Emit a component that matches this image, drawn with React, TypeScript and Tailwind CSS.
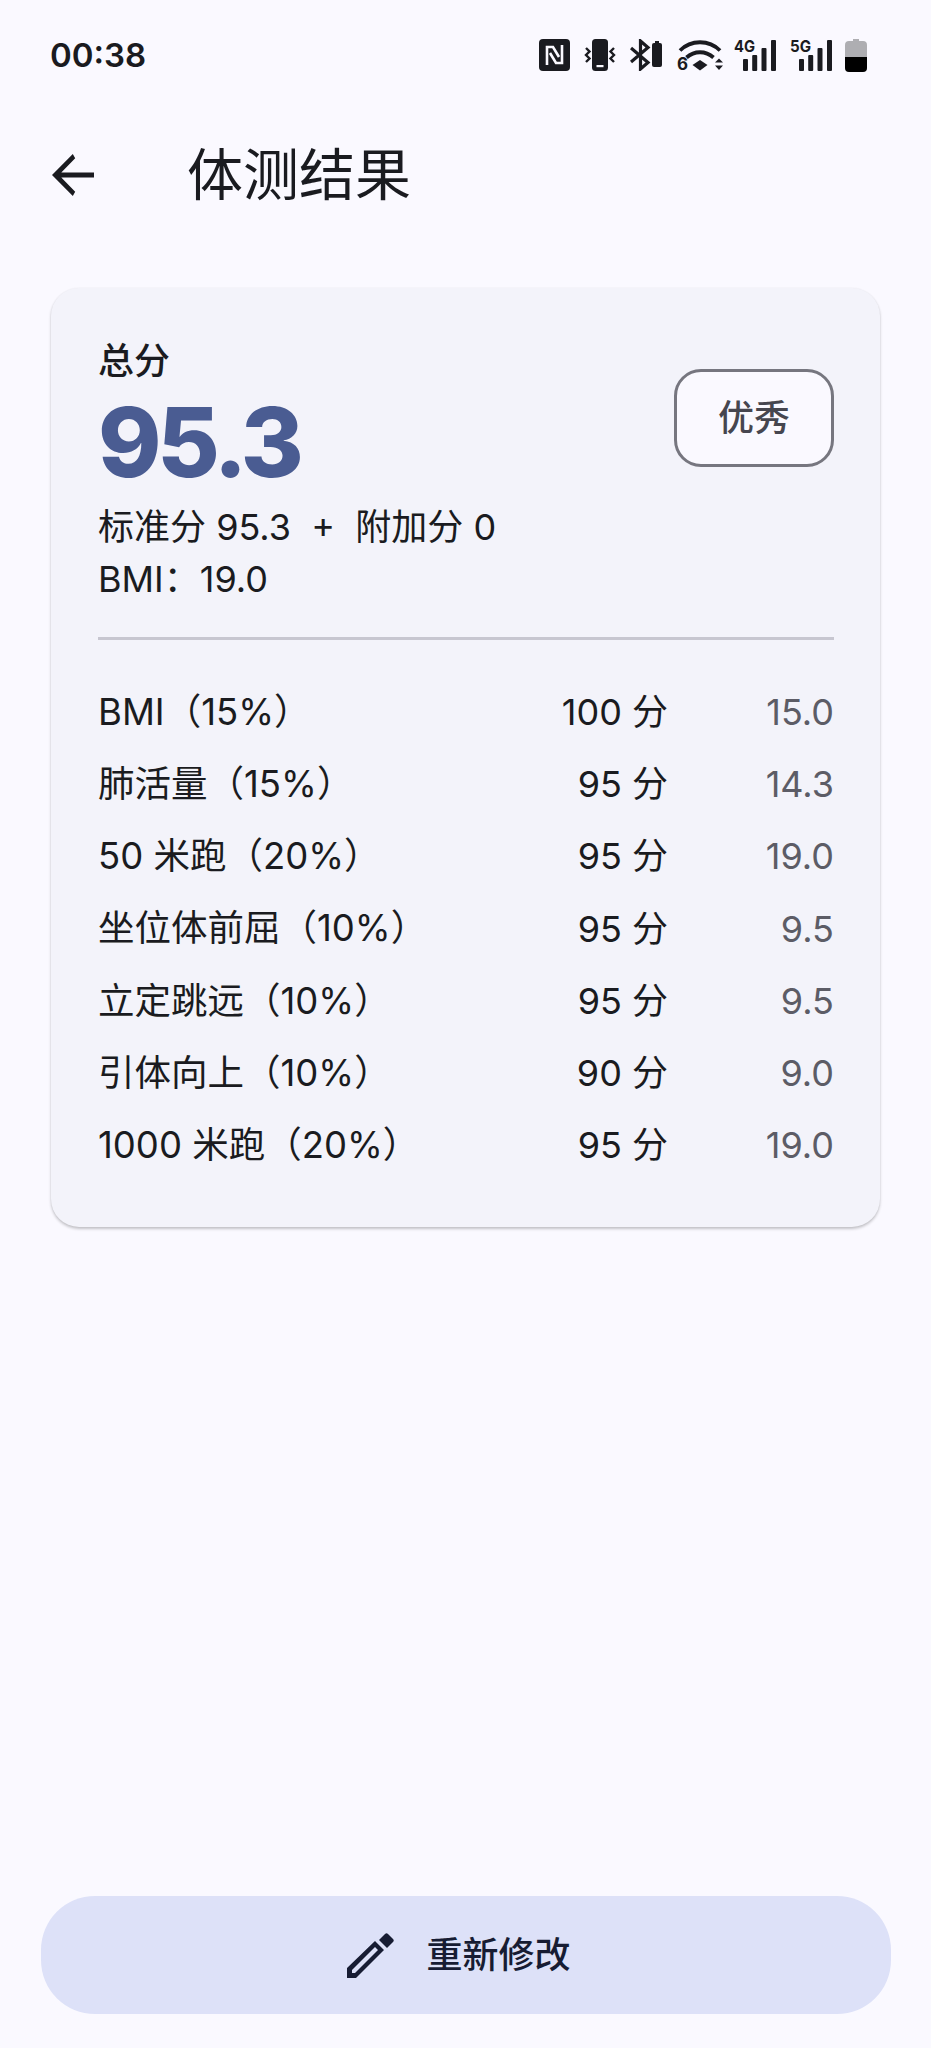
import React from "react";

const rows = [
  { name: "BMI（15%）", score: "100 分", value: "15.0" },
  { name: "肺活量（15%）", score: "95 分", value: "14.3" },
  { name: "50 米跑（20%）", score: "95 分", value: "19.0" },
  { name: "坐位体前屈（10%）", score: "95 分", value: "9.5" },
  { name: "立定跳远（10%）", score: "95 分", value: "9.5" },
  { name: "引体向上（10%）", score: "90 分", value: "9.0" },
  { name: "1000 米跑（20%）", score: "95 分", value: "19.0" },
];

const NfcIcon = () => (
  <svg width="31" height="32" viewBox="0 0 31 32">
    <rect width="31" height="32" rx="4" fill="#1a1b20" />
    <path d="M8 26V8h6l6 10" stroke="#faf9ff" strokeWidth="2.600" fill="none" />
    <path d="M23 6v18h-6l-6-10" stroke="#faf9ff" strokeWidth="2.600" fill="none" />
  </svg>
);

const VibrateIcon = () => (
  <svg width="32" height="32" viewBox="0 0 32 32">
    <rect x="8" y="0" width="16" height="32" rx="3.500" fill="#1a1b20" />
    <rect x="12.500" y="26" width="7" height="2.200" fill="#faf9ff" />
    <path d="M2 9l3.500 3.500L2 16l3.500 3.500L2 23" stroke="#1a1b20" strokeWidth="2.400" fill="none" />
    <path d="M30 9l-3.500 3.500L30 16l-3.500 3.500L30 23" stroke="#1a1b20" strokeWidth="2.400" fill="none" />
  </svg>
);

const BluetoothIcon = () => (
  <svg width="32" height="32" viewBox="0 0 32 32">
    <path d="M1 9l17 14.500-7.500 6.500V2L18 8.500 1 23" stroke="#1a1b20" strokeWidth="3.200" fill="none" />
    <rect x="22" y="4" width="10" height="24" rx="2" fill="#1a1b20" />
    <rect x="25" y="2" width="4" height="3" fill="#1a1b20" />
  </svg>
);

const WifiIcon = () => (
  <svg width="46" height="32" viewBox="0 0 46 32" className="overflow-visible">
    <path d="M3 11.500C14 .5 32 .5 43 11.500" stroke="#1a1b20" strokeWidth="3.800" fill="none" />
    <path d="M9.500 18.500c8-7 19-7 27 0" stroke="#1a1b20" strokeWidth="3.800" fill="none" />
    <path d="M15.500 26l7.500-5 7.500 5-7.500 5.500z" fill="#1a1b20" />
    <text x="0" y="31" fontSize="17" fontWeight="700" fill="#1a1b20" fontFamily="Inter, sans-serif">6</text>
    <path d="M42 19.500l4 4h-8zM42 31l4-4.500h-8z" fill="#1a1b20" />
  </svg>
);

const SignalIcon = ({ label }: { label: string }) => (
  <svg width="42" height="32" viewBox="0 0 42 32" className="overflow-visible">
    <text x="0" y="12.500" fontSize="16" fontWeight="700" fill="#1a1b20" fontFamily="Inter, sans-serif" textLength="21" lengthAdjust="spacingAndGlyphs">
      {label}
    </text>
    <rect x="9" y="20" width="5" height="12" rx="1" fill="#1a1b20" />
    <rect x="18.200" y="16" width="5" height="16" rx="1" fill="#1a1b20" />
    <rect x="27.500" y="9" width="5" height="23" rx="1" fill="#1a1b20" />
    <rect x="37" y="1" width="5" height="31" rx="1" fill="#1a1b20" />
  </svg>
);

const BatteryIcon = () => (
  <svg width="22" height="33" viewBox="0 0 22 33">
    <path d="M8 0h6v2h4a4 4 0 0 1 4 4v12H0V6a4 4 0 0 1 4-4h4z" fill="#aeaeb2" />
    <path d="M0 18h22v11a4 4 0 0 1-4 4H4a4 4 0 0 1-4-4z" fill="#000" />
  </svg>
);

const BackIcon = () => (
  <svg width="42" height="42" viewBox="0 0 42 42">
    <path d="M42 18.600H9.300L23.200 4.200 20.800 0 0 21l20.800 21 2.400-4.200L9.300 23.400H42z" fill="#1a1b20" />
  </svg>
);

const PencilIcon = () => (
  <svg width="48" height="48" viewBox="0 0 48 48">
    <path d="M0 37L28 10l9 9-28 28H0zM5 39v3h3l23-23-3-3z" fill="#171c33" fillRule="evenodd" />
    <path d="M32 9l6-6c1-1 2-1 3 0l5 5c1 1 1 2 0 3l-6 6z" fill="#171c33" />
  </svg>
);

export default function App() {
  return (
    <div className="min-h-[2048px] flex flex-col bg-[#faf9ff] text-[#1a1b20] font-['Inter','Noto_Sans_CJK_SC',sans-serif]">
      {/* status bar */}
      <div className="h-[110px] flex items-center justify-between pl-[50px] pr-[64px]">
        <span className="text-[33px] font-semibold leading-none">00:38</span>
        <div className="flex items-center">
          <NfcIcon />
          <div className="ml-[14px] flex"><VibrateIcon /></div>
          <div className="ml-[14.500px] flex"><BluetoothIcon /></div>
          <div className="ml-[14.500px] flex"><WifiIcon /></div>
          <div className="ml-[11.500px] flex"><SignalIcon label="4G" /></div>
          <div className="ml-[13.500px] flex"><SignalIcon label="5G" /></div>
          <div className="ml-[13.500px] flex"><BatteryIcon /></div>
        </div>
      </div>

      {/* app bar */}
      <div className="h-[130px] flex items-center pl-[52px]">
        <BackIcon />
        <h1 className="ml-[93px] text-[56px] font-normal leading-none text-[#1a1b20]">体测结果</h1>
      </div>

      {/* result card */}
      <div className="mt-[48px] mx-[51px] rounded-[28px] bg-[#f3f3fa] pl-[47px] pr-[46px] pt-[49px] pb-[46px] shadow-[0_2px_3px_rgba(0,0,0,0.22),0_0_2px_rgba(0,0,0,0.05)]">
        <div className="flex items-center justify-between">
          <div>
            <p className="text-[36px] leading-[48px] font-medium">总分</p>
            <p className="text-[96px] leading-[96px] font-extrabold tracking-[-0.045em] text-[#4a5c92] mt-[9px]">95.3</p>
          </div>
          <div className="w-[160px] h-[98px] mt-[8px] flex items-center justify-center rounded-[27px] border-[3px] border-[#76767f] bg-[#faf9ff] text-[36px] font-medium text-[#46464f]">
            优秀
          </div>
        </div>

        <p className="mt-[11px] text-[36px] leading-[52px] whitespace-pre">标准分 95.3  +  附加分 0</p>
        <p className="text-[36px] leading-[52px]">BMI：19.0</p>

        <div className="mt-[32px] mb-[36px] h-[3px] bg-[#c7c6d0]" />

        {rows.map((row) => (
          <div key={row.name} className="h-[72.200px] flex items-center text-[36px] leading-none">
            <span className="flex-1 text-[36.500px]">{row.name}</span>
            <span>{row.score}</span>
            <span className="w-[166px] text-right text-[#5c5c66]">{row.value}</span>
          </div>
        ))}
      </div>

      {/* bottom action */}
      <div className="mt-auto pl-[41px] pr-[40px] pb-[34px]">
        <button className="w-full h-[118px] rounded-[54px] bg-[#dde1f8] flex items-center justify-center gap-[31px] pr-[14px] text-[36px] font-medium text-[#171c33]">
          <PencilIcon />
          重新修改
        </button>
      </div>
    </div>
  );
}
